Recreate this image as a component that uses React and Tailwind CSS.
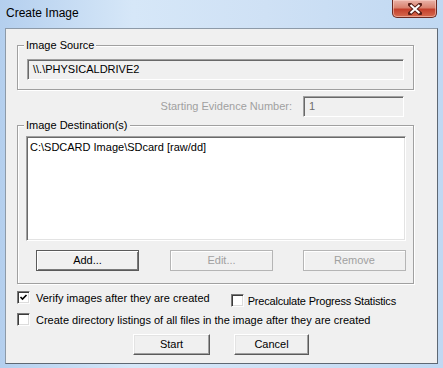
import React from "react";

const font = { fontFamily: '"Liberation Sans", Arial, sans-serif' };

function Check({ checked }) {
  return (
    <span className="box-border inline-flex w-[13px] h-[13px] shrink-0 items-center justify-center border border-t-[#7a7a7a] border-l-[#7a7a7a] border-r-[#fdfdfd] border-b-[#fdfdfd] bg-white shadow-[inset_1px_1px_0_#3c3c3c,inset_-1px_-1px_0_#dcdcdc]">
      {checked && (
        <svg width="9" height="9" viewBox="0 0 9 9">
          <path d="M1.5 4 L3.5 6 L7.5 2" stroke="#000" strokeWidth="1.6" fill="none" />
        </svg>
      )}
    </span>
  );
}

function Btn({ children, w, disabled, def }) {
  let cls = "box-border flex items-center justify-center h-[21px] bg-[#f0f0f0] text-[11px] ";
  if (disabled) cls += "text-[#a0a0a0] border border-[#b5b5b5] shadow-[inset_1px_1px_0_#fff]";
  else if (def) cls += "text-black border border-[#5a5a5a] shadow-[inset_1px_1px_0_#fff,inset_-1px_-1px_0_#7a7a7a]";
  else cls += "text-black border border-t-[#fff] border-l-[#fff] border-r-[#5a5a5a] border-b-[#5a5a5a] shadow-[inset_-1px_-1px_0_#a0a0a0,inset_1px_1px_0_#e3e3e3]";
  return (
    <div className={cls} style={{ width: w }}>
      {children}
    </div>
  );
}

export default function App() {
  return (
    <div
      className="w-[443px] h-[368px] overflow-hidden flex flex-col bg-[linear-gradient(to_right,#b4cfee,#d6e7f8_30%,#cfe1f5_60%,#c0d8f2)]"
      style={font}
    >
      <div className="h-[28px] flex items-start shrink-0">
        <div className="pl-[6px] pt-[5px] text-[12px] leading-[16px] text-black">Create Image</div>
        <div className="ml-auto mr-[6px] w-[45px] h-[18px] box-border rounded-b-[5px] border border-t-0 border-[#6b2a22] bg-[linear-gradient(to_bottom,#eab3a8,#d9826f_45%,#c4402c_55%,#d66a4f)] flex items-center justify-center shadow-[inset_0_0_0_1px_rgba(255,220,210,0.5)]">
          <svg width="14" height="12" viewBox="0 0 14 12">
            <path d="M2 1.5 L12 10.5 M12 1.5 L2 10.5" stroke="#5a2018" strokeWidth="4" strokeLinecap="square" />
            <path d="M2.5 2 L11.5 10 M11.5 2 L2.5 10" stroke="#fff" strokeWidth="2" />
          </svg>
        </div>
      </div>
      <div className="ml-[5px] w-[433px] h-[336px] box-border border border-t-[#8d9aa8] border-l-[#8d9aa8] border-r-[#5e6873] border-b-[#5e6873] bg-[#f0f0f0] flex flex-col text-[11px] text-black">
        <div className="ml-[11px] mt-[16px] w-[397px] h-[45px] box-border border border-[#a0a0a0] shadow-[inset_1px_1px_0_#fff,1px_1px_0_#fff] flex flex-col">
          <span className="-mt-[8px] ml-[6px] px-[2px] w-fit bg-[#f0f0f0] leading-[14px]">Image Source</span>
          <div className="mt-[7px] ml-[9px] w-[377px] h-[21px] box-border border border-t-[#a0a0a0] border-l-[#a0a0a0] border-r-white border-b-white shadow-[inset_1px_1px_0_#696969] bg-[#f0f0f0] pl-[5px] leading-[18px]">
            \\.\PHYSICALDRIVE2
          </div>
        </div>
        <div className="mt-[6px] flex items-center justify-end pr-[33px] gap-[11px]">
          <span className="text-[#a0a0a0]">Starting Evidence Number:</span>
          <div className="w-[101px] h-[21px] box-border border border-t-[#a0a0a0] border-l-[#a0a0a0] border-r-white border-b-white shadow-[inset_1px_1px_0_#696969] bg-[#f0f0f0] pl-[5px] leading-[18px] text-[#6d6d6d]">
            1
          </div>
        </div>
        <div className="ml-[11px] mt-[8px] w-[397px] h-[159px] box-border border border-[#a0a0a0] shadow-[inset_1px_1px_0_#fff,1px_1px_0_#fff] flex flex-col">
          <span className="-mt-[8px] ml-[6px] px-[2px] w-fit bg-[#f0f0f0] leading-[14px]">Image Destination(s)</span>
          <div className="mt-[4px] ml-[8px] w-[380px] h-[105px] box-border border border-t-[#a0a0a0] border-l-[#a0a0a0] border-r-white border-b-white shadow-[inset_1px_1px_0_#696969,inset_-1px_-1px_0_#e3e3e3] bg-white pl-[3px] pt-[3px] leading-[14px]">
            C:\SDCARD Image\SDcard [raw/dd]
          </div>
          <div className="mt-[9px] ml-[18px] flex">
            <Btn w={103} def>Add...</Btn>
            <div className="ml-[31px]">
              <Btn w={103} disabled>Edit...</Btn>
            </div>
            <div className="ml-[30px]">
              <Btn w={103} disabled>Remove</Btn>
            </div>
          </div>
        </div>
        <div className="mt-[6px] ml-[11px] flex items-start">
          <div className="flex items-center gap-[6px] h-[15px]">
            <Check checked />
            <span className="leading-[14px]">Verify images after they are created</span>
          </div>
          <div className="ml-[21px] mt-[3px] flex items-center gap-[4px] h-[15px]">
            <Check />
            <span className="leading-[14px] tracking-[-0.2px]">Precalculate Progress Statistics</span>
          </div>
        </div>
        <div className="mt-[4px] ml-[11px] flex items-center gap-[6px] h-[15px]">
          <Check />
          <span className="leading-[14px]">Create directory listings of all files in the image after they are created</span>
        </div>
        <div className="mt-[7px] ml-[127px] flex gap-[24px]">
          <div className="h-[22px]">
            <Btn w={77}>Start</Btn>
          </div>
          <Btn w={75}>Cancel</Btn>
        </div>
      </div>
    </div>
  );
}
